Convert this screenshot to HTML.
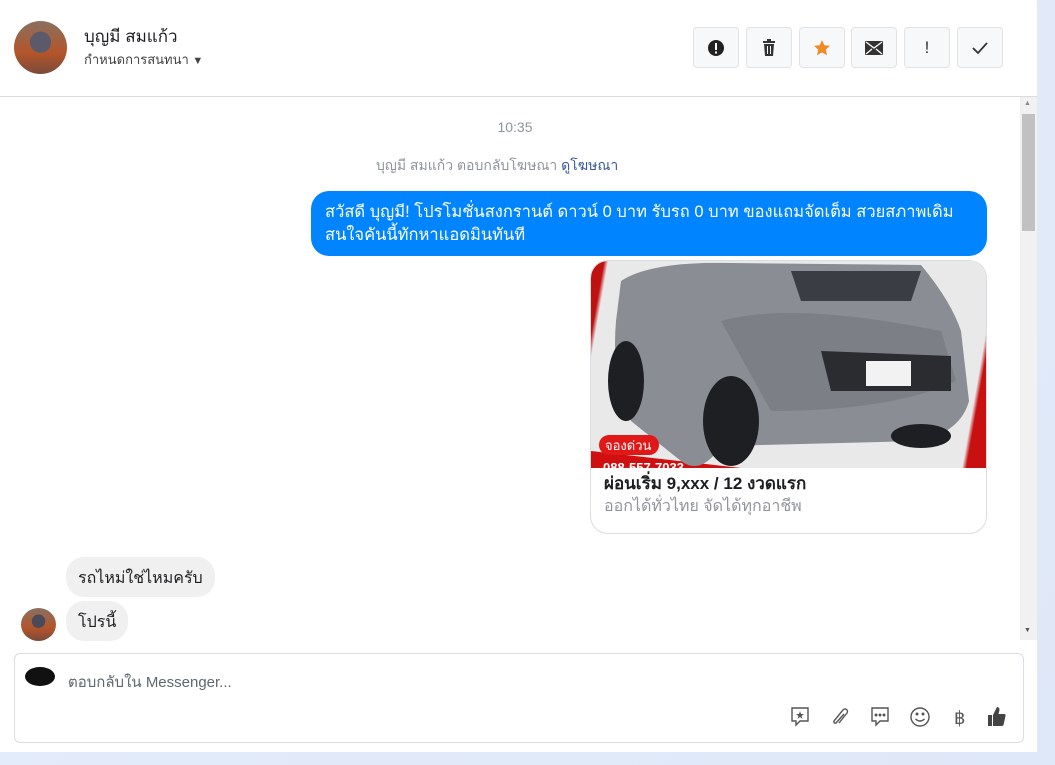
<!DOCTYPE html>
<html><head><meta charset="utf-8"><style>
*{box-sizing:border-box;margin:0;padding:0}
body{width:1055px;height:765px;overflow:hidden;background:linear-gradient(135deg,#e6eefb,#dfe8f8);font-family:"Liberation Sans","Noto Sans CJK SC",sans-serif;position:relative}
.panel{position:absolute;left:0;top:0;width:1037px;height:752px;background:#fff}
.hdr{position:absolute;left:0;top:0;width:1037px;height:97px;border-bottom:1px solid #dcdcdc}
.av{position:absolute;left:14px;top:21px;width:53px;height:53px;border-radius:50%;background:radial-gradient(circle at 50% 40%,#5a5a6a 0 25%,transparent 26%),linear-gradient(180deg,#8a7060,#b4552a 60%,#7a4a3a);overflow:hidden}
.name{position:absolute;left:84px;top:23px;font-size:17px;color:#1c1e21}
.sub{position:absolute;left:84px;top:49px;font-size:13px;color:#444}
.btn{position:absolute;top:27px;width:46px;height:41px;border:1px solid #e2e2e2;border-radius:4px;background:#f7f8fa;display:flex;align-items:center;justify-content:center}
.sb{position:absolute;left:1020px;top:97px;width:17px;height:543px;background:#f1f1f1}
.thumb{position:absolute;left:1022px;top:114px;width:13px;height:117px;background:#c1c1c1}
.time{position:absolute;left:0;width:1030px;top:119px;text-align:center;font-size:14px;color:#90949c}
.note{position:absolute;left:376px;top:155px;font-size:14px;color:#90949c}
.note a{color:#385898}
.bub{position:absolute;left:311px;top:191px;width:676px;height:65px;background:#0084ff;border-radius:18px;color:#fff;font-size:16.5px;line-height:23px;padding:10px 14px;white-space:nowrap}
.card{position:absolute;left:590px;top:260px;width:397px;height:274px;border:1px solid #dadde1;border-radius:18px;overflow:hidden;background:#fff}
.img{position:absolute;left:0;top:0;width:397px;height:207px;background:linear-gradient(100deg,#c01010 0 3%,#e9e9ea 4% 94%,#c81010 95%)}
.ct{position:absolute;left:13px;top:209px;font-size:17px;font-weight:bold;color:#1c1e21}
.cs{position:absolute;left:13px;top:233px;font-size:16px;color:#90949c}
.in{position:absolute;left:66px;height:40px;background:#f1f0f0;border-radius:18px;font-size:16px;color:#1c1e21;padding:9px 12px}
.comp{position:absolute;left:14px;top:653px;width:1010px;height:90px;border:1px solid #dadde1;border-radius:6px;background:#fff}
</style></head><body>
<div class="panel">
<div class="hdr">
<div class="av"></div>
<div class="name">บุญมี สมแก้ว</div>
<div class="sub">กำหนดการสนทนา <span style="font-size:11px">▼</span></div>
<div class="btn" style="left:693px"><svg width="18" height="18"><circle cx="9" cy="9" r="8" fill="#222"/><rect x="8" y="4" width="2" height="7" fill="#fff"/><rect x="8" y="12.5" width="2" height="2" fill="#fff"/></svg></div>
<div class="btn" style="left:746px"><svg width="16" height="18"><rect x="2" y="2" width="12" height="2" fill="#333"/><rect x="6" y="0" width="4" height="2" fill="#333"/><path d="M3 5h10l-1 12H4z" fill="#333"/><path d="M6.5 7v8M9.5 7v8" stroke="#fff"/></svg></div>
<div class="btn" style="left:799px"><svg width="18" height="18"><path d="M9 1l2.4 5.2 5.6.6-4.2 3.8 1.2 5.6L9 13.4 4 16.2l1.2-5.6L1 6.8l5.6-.6z" fill="#f08a24"/></svg></div>
<div class="btn" style="left:851px"><svg width="18" height="14"><rect x="0" y="0" width="18" height="14" rx="1" fill="#333"/><path d="M1 1l8 6 8-6M1 13l6-5M17 13l-6-5" stroke="#fff" stroke-width="1.3" fill="none"/></svg></div>
<div class="btn" style="left:904px;font-size:17px;color:#333">!</div>
<div class="btn" style="left:957px"><svg width="16" height="14"><path d="M1 7l5 5 9-10" stroke="#333" stroke-width="1.8" fill="none"/></svg></div>
</div>
<div class="sb"></div><div class="thumb"></div>
<div style="position:absolute;left:1024px;top:100px;font-size:7px;color:#888">▲</div>
<div style="position:absolute;left:1024px;top:627px;font-size:7px;color:#555">▼</div>
<div class="time">10:35</div>
<div class="note">บุญมี สมแก้ว ตอบกลับโฆษณา <a>ดูโฆษณา</a></div>
<div class="bub">สวัสดี บุญมี! โปรโมชั่นสงกรานต์ ดาวน์ 0 บาท รับรถ 0 บาท ของแถมจัดเต็ม สวยสภาพเดิม<br>สนใจคันนี้ทักหาแอดมินทันที</div>
<div class="card">
<div class="img">
<svg width="397" height="207" style="position:absolute;left:0;top:0">
<path d="M0 190L150 207H0z" fill="#d01010"/>
<path d="M30 20Q60 0 140 2L330 4Q360 40 370 70L378 140Q370 170 330 180L130 185Q110 215 90 200L40 160Q20 120 25 60z" fill="#8a8d94"/>
<path d="M130 60Q200 40 350 70L365 120Q300 150 180 150z" fill="#7c7f86"/>
<path d="M200 10L330 10L320 40L210 40z" fill="#3a3d44"/>
<path d="M230 90L360 95L360 130L240 130z" fill="#2a2c30"/>
<rect x="275" y="100" width="45" height="25" fill="#f2f2f2"/>
<ellipse cx="140" cy="160" rx="28" ry="45" fill="#1e1f22"/>
<ellipse cx="35" cy="120" rx="18" ry="40" fill="#1e1f22"/>
<ellipse cx="330" cy="175" rx="30" ry="12" fill="#1e1f22"/>
<rect x="8" y="174" width="60" height="20" rx="10" fill="#e01818"/>
<text x="14" y="189" font-size="13" fill="#fff" font-family="Liberation Sans,Noto Sans CJK SC,sans-serif">จองด่วน</text>
<text x="12" y="211" font-size="13" font-weight="bold" fill="#fff" font-family="Liberation Sans,sans-serif">088-557-7033</text>
</svg></div>
<div class="ct">ผ่อนเริ่ม 9,xxx / 12 งวดแรก</div>
<div class="cs">ออกได้ทั่วไทย จัดได้ทุกอาชีพ</div>
</div>
<div class="in" style="top:557px">รถไหม่ใช่ไหมครับ</div>
<div class="in" style="top:601px">โปรนี้</div>
<div style="position:absolute;left:21px;top:608px;width:35px;height:33px;border-radius:50%;background:radial-gradient(circle at 50% 40%,#4a4a5a 0 25%,transparent 26%),linear-gradient(180deg,#8a7060,#b4552a 60%,#7a4a3a)"></div>
<div class="comp">
<div style="position:absolute;left:10px;top:13px;width:30px;height:19px;border-radius:50%;background:#111"></div>
<div style="position:absolute;left:53px;top:16px;font-size:15px;color:#606770">ตอบกลับใน Messenger...</div>
<svg style="position:absolute;left:774px;top:51px" width="230" height="24" fill="none" stroke="#555" stroke-width="1.4">
<path d="M3 3h16v13H11l-4 4v-4H3z"/><path d="M11 6l1 3h3l-2.5 2 1 3-2.5-2-2.5 2 1-3L7 9h3z" fill="#555" stroke="none"/>
<path d="M50 18l8-10a2.5 2.5 0 0 0-4-3l-9 11a1.5 1.5 0 0 0 2 2l8-9"/>
<path d="M83 3h16v13H91l-4 4v-4h-4z"/><circle cx="87" cy="10" r=".8" fill="#555"/><circle cx="91" cy="10" r=".8" fill="#555"/><circle cx="95" cy="10" r=".8" fill="#555"/>
<circle cx="131" cy="12" r="9"/><circle cx="128" cy="9" r=".8" fill="#555"/><circle cx="134" cy="9" r=".8" fill="#555"/><path d="M126.5 14q4.5 4 9 0"/>
<text x="165" y="19" font-size="18" fill="#555" stroke="none" font-family="Liberation Sans,sans-serif">฿</text>
<path d="M199 10h4v11h-4z M204 10l4-8q2.5 0 2.5 3l-1 4h5.5q2 0 1.5 2l-2 9q-.5 1-2 1h-8.5z" fill="#444" stroke="none"/>
</svg>
</div>
</div>
</body></html>
